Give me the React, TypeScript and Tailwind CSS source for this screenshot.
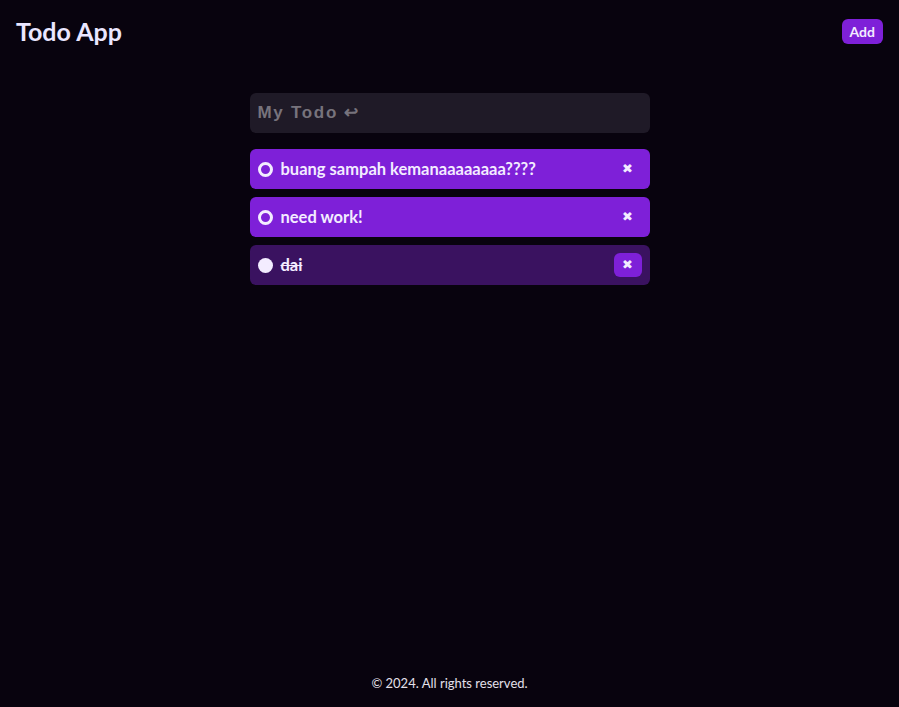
import React from 'react';

interface Todo {
  id: number;
  text: string;
  done: boolean;
}

const todos: Todo[] = [
  { id: 1, text: 'buang sampah kemanaaaaaaaa????', done: false },
  { id: 2, text: 'need work!', done: false },
  { id: 3, text: 'dai', done: true },
];

const TodoRow: React.FC<{ todo: Todo }> = ({ todo }) => {
  return (
    <div
      className={`flex items-center h-10 rounded-md pl-2 pr-2 ${
        todo.done ? 'bg-[#3a1260]' : 'bg-[#7e20d8]'
      }`}
    >
      {todo.done ? (
        <span className="w-[15px] h-[15px] rounded-full bg-[#f3ecff] shrink-0" />
      ) : (
        <span className="w-[15px] h-[15px] rounded-full border-[3px] border-[#f3ecff] shrink-0" />
      )}
      <span
        className={`ml-2 text-[16.5px] font-bold text-[#f3ecff] ${todo.done ? 'line-through' : ''}`}
      >
        {todo.text}
      </span>
      <button
        className={`ml-auto flex items-center justify-center w-7 h-6 rounded-md text-[13px] text-[#f3ecff] ${
          todo.done ? 'bg-[#7e20d8]' : ''
        }`}
      >
        ✖
      </button>
    </div>
  );
};

export default function App() {
  return (
    <div
      className="min-h-[707px] flex flex-col bg-[#08030e] text-[#f3ecff]"
      style={{ fontFamily: 'Lato, "Noto Sans", sans-serif' }}
    >
      <header className="flex items-center justify-between h-[62px] px-4">
        <h1 className="text-[25px] font-bold leading-none text-[#eae6ff]">Todo App</h1>
        <button className="h-[25px] px-2 rounded-md bg-[#7e20d8] text-[14px] font-bold text-[#f3ecff]">
          Add
        </button>
      </header>

      <main className="flex-1 flex flex-col items-center pt-[31px]">
        <div className="w-[400px] flex flex-col gap-2">
          <input
            placeholder="My Todo ↩"
            className="h-10 mb-2 rounded-md bg-[#1f1a27] px-2 text-[17px] font-bold tracking-[0.1em] text-gray-300 placeholder:text-[#77737c] outline-none"
            style={{ fontFamily: '"Liberation Sans", Arial, sans-serif' }}
          />
          {todos.map((t) => (
            <TodoRow key={t.id} todo={t} />
          ))}
        </div>
      </main>

      <footer className="h-[33px] flex items-start justify-center text-[13px] text-[#e4e0ea]">
        © 2024. All rights reserved.
      </footer>
    </div>
  );
}
